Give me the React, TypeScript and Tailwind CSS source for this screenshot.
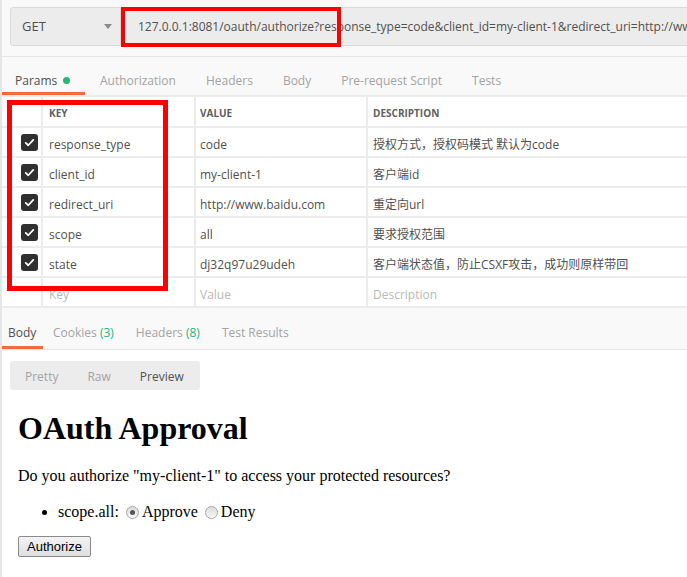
const ui = "font-['Open_Sans','Noto_Sans_CJK_SC',sans-serif]";

interface Param {
  key: string;
  value: string;
  description: string;
}

const params: Param[] = [
  { key: "response_type", value: "code", description: "授权方式，授权码模式 默认为code" },
  { key: "client_id", value: "my-client-1", description: "客户端id" },
  { key: "redirect_uri", value: "http://www.baidu.com", description: "重定向url" },
  { key: "scope", value: "all", description: "要求授权范围" },
  { key: "state", value: "dj32q97u29udeh", description: "客户端状态值，防止CSXF攻击，成功则原样带回" },
];

function Checkbox() {
  return (
    <span className="flex h-[17px] w-[17px] items-center justify-center rounded-[3px] bg-[#2f2f2f]">
      <svg viewBox="0 0 16 16" className="h-[11px] w-[11px]">
        <path d="M2.5 8.5 L6.2 12 L13.5 4.2" fill="none" stroke="white" strokeWidth="2.6" strokeLinecap="round" strokeLinejoin="round" />
      </svg>
    </span>
  );
}

function Radio({ checked }: { checked?: boolean }) {
  return (
    <span className="mx-[3px] inline-flex h-[13px] w-[13px] -translate-y-[1px] items-center justify-center rounded-full border border-[#a6a6a6] bg-gradient-to-b from-[#dcdcdc] to-[#f8f8f8] align-middle">
      {checked && <span className="h-[5px] w-[5px] rounded-full bg-[#555]" />}
    </span>
  );
}

function Row({ cells, placeholder, checked }: { cells: string[]; placeholder?: boolean; checked?: boolean }) {
  const tone = placeholder ? "text-[#b8b8b8]" : "text-[#505050]";
  return (
    <div className={`flex h-[30px] border-b-2 border-[#ececec] text-[12px] ${tone}`}>
      <div className="flex w-[39px] items-center pl-[19px]">{checked && <Checkbox />}</div>
      <div className="flex w-[153px] items-center border-l-2 border-[#ececec] pt-[5px] pl-[6px]">{cells[0]}</div>
      <div className="flex w-[172px] items-center border-l-2 border-[#ececec] pt-[5px] pl-[4px]">{cells[1]}</div>
      <div className="flex flex-1 items-center border-l-2 border-[#ececec] pt-[5px] pl-[5px] whitespace-nowrap">{cells[2]}</div>
    </div>
  );
}

export default function App() {
  return (
    <div className={`relative h-[577px] w-[687px] overflow-hidden border-l-2 border-[#e6e6e6] bg-white ${ui}`}>
      {/* request bar */}
      <div className="flex h-[57px] border-b border-[#e6e6e6] bg-[#f9f9f9] pt-[7px] pl-[8px]">
        <div className="flex h-[39px] w-[111px] shrink-0 items-center justify-between rounded-l-[3px] border border-[#dadada] bg-[#ececec] pr-[8px] pl-[11px] text-[13px] text-[#505050]">
          GET
          <svg viewBox="0 0 10 6" className="h-[5px] w-[8px]">
            <path d="M0 0 H10 L5 6 Z" fill="#8a8a8a" />
          </svg>
        </div>
        <div className="flex h-[39px] min-w-0 flex-1 items-center overflow-hidden border-y border-[#dadada] bg-[#ececec] pl-[17px] text-[12px] whitespace-nowrap text-[#505050]">
          127.0.0.1:8081/oauth/authorize?response_type=code&amp;client_id=my-client-1&amp;redirect_uri=http://www.baidu.com
        </div>
      </div>

      {/* request tabs */}
      <div className="flex h-[40px] items-end border-b-2 border-[#ececec] bg-[#f9f9f9] text-[12px] text-[#a3a3a3]">
        <div className="flex h-[40px] w-[83px] items-center border-b-[3px] border-[#f26b3a] pt-[14px] pl-[13px] text-[#505050]">
          Params
          <span className="ml-[6px] h-[7px] w-[7px] rounded-full bg-[#26b47f]" />
        </div>
        <div className="flex h-[40px] items-center gap-[30px] pt-[14px] pl-[15px] pb-[3px]">
          <span>Authorization</span>
          <span>Headers</span>
          <span>Body</span>
          <span>Pre-request Script</span>
          <span>Tests</span>
        </div>
      </div>

      {/* params table */}
      <div className="flex h-[31px] border-b-2 border-[#ececec] text-[10px] font-bold text-[#606060]">
        <div className="w-[39px]" />
        <div className="flex w-[153px] items-center border-l-2 border-[#ececec] pt-[3px] pl-[6px]">KEY</div>
        <div className="flex w-[172px] items-center border-l-2 border-[#ececec] pt-[3px] pl-[4px]">VALUE</div>
        <div className="flex flex-1 items-center border-l-2 border-[#ececec] pt-[3px] pl-[5px]">DESCRIPTION</div>
      </div>
      {params.map((p) => (
        <Row key={p.key} checked cells={[p.key, p.value, p.description]} />
      ))}
      <Row placeholder cells={["Key", "Value", "Description"]} />

      {/* response tabs */}
      <div className="flex h-[42px] items-end border-b border-[#e6e6e6] bg-[#f9f9f9] text-[12px] text-[#a3a3a3]">
        <div className="flex h-[42px] w-[41px] items-center border-b-[3px] border-[#f26b3a] pt-[12px] pl-[6px] text-[#505050]">Body</div>
        <div className="flex h-[42px] items-center gap-[22px] pt-[12px] pl-[10px] pb-[3px]">
          <span>
            Cookies <span className="text-[#26b47f]">(3)</span>
          </span>
          <span>
            Headers <span className="text-[#26b47f]">(8)</span>
          </span>
          <span>Test Results</span>
        </div>
      </div>

      {/* preview */}
      <div className="pt-[11px] pl-[8px]">
        <div className="flex h-[29px] w-[190px] items-center gap-[29px] rounded-[3px] bg-[#ececec] pt-[2px] pl-[15px] text-[12px] text-[#a3a3a3]">
          <span>Pretty</span>
          <span>Raw</span>
          <span className="text-[#505050]">Preview</span>
        </div>
      </div>
      <div className="pl-[16px] font-['Liberation_Serif',serif] text-black">
        <h1 className="mt-[20px] text-[32px] leading-[37px] font-bold">OAuth Approval</h1>
        <p className="mt-[20px] text-[16px] leading-[18px]">
          Do you authorize "my-client-1" to access your protected resources?
        </p>
        <ul className="mt-[18px] list-disc pl-[40px] text-[16px] leading-[18px]">
          <li>
            scope.all: <Radio checked />Approve <Radio />Deny
          </li>
        </ul>
        <button className="mt-[15px] h-[21px] rounded-[2px] border border-[#8a8a8a] bg-gradient-to-b from-[#f4f4f4] to-[#dedede] px-[8px] font-['Liberation_Sans',sans-serif] text-[13px] text-black">
          Authorize
        </button>
      </div>

      {/* annotation boxes */}
      <div className="absolute top-[7px] left-[119px] h-[40px] w-[220px] border-4 border-[#ff0000]" />
      <div className="absolute top-[100px] left-[5px] h-[191px] w-[161px] border-[5px] border-[#ff0000]" />
    </div>
  );
}
